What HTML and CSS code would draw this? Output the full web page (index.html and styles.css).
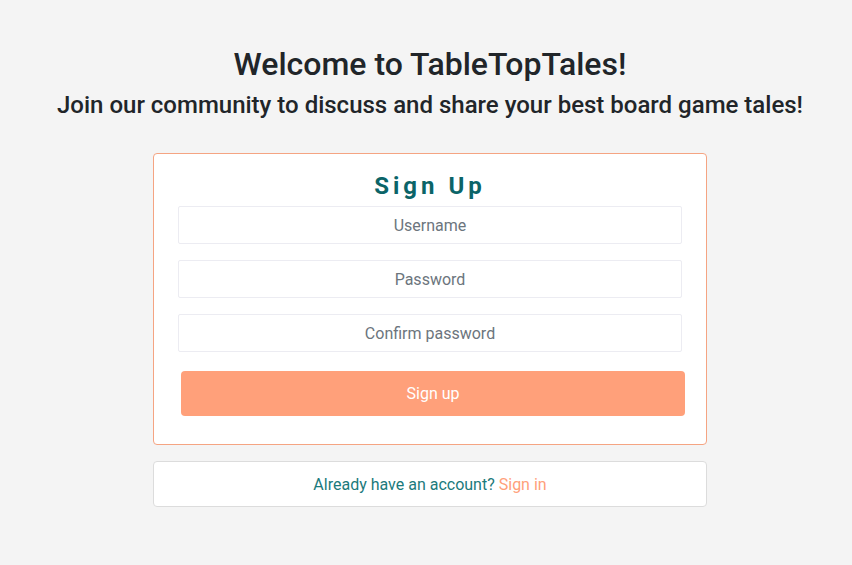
FILE: index.html
```html
<!DOCTYPE html>
<html>
<head>
<meta charset="utf-8">
<link rel="stylesheet" href="styles.css">
</head>
<body>
<main class="page">
  <h1 class="title">Welcome to TableTopTales!</h1>
  <h2 class="subtitle">Join our community to discuss and share your best board game tales!</h2>
  <form class="card">
    <h3 class="card-title">Sign Up</h3>
    <input class="field" type="text" placeholder="Username">
    <input class="field" type="password" placeholder="Password">
    <input class="field" type="password" placeholder="Confirm password">
    <button class="btn" type="button">Sign up</button>
  </form>
  <div class="alt">Already have an account? <a class="alt-link" href="#">Sign in</a></div>
</main>
</body>
</html>
```
FILE: styles.css
```css
html, body { margin: 0; padding: 0; }
body {
  background: #f4f4f4;
  font-family: Roboto, "Noto Sans", sans-serif;
  color: #212529;
}
.page {
  display: flex;
  flex-direction: column;
  align-items: center;
  padding-top: 45px;
  padding-left: 8px;
}
.title {
  margin: 0;
  font-size: 32px;
  font-weight: 500;
  line-height: 38px;
}
.subtitle {
  margin: 0;
  margin-top: 7px;
  font-size: 24px;
  font-weight: 500;
  line-height: 30px;
}
.card {
  box-sizing: border-box;
  width: 554px;
  margin-top: 33px;
  background: #fff;
  border: 1px solid #f5a482;
  border-radius: 4px;
  padding: 18px 24px 28px;
  display: flex;
  flex-direction: column;
}
.card-title {
  margin: 0 0 6px;
  text-align: center;
  color: #0b6468;
  font-size: 24px;
  font-weight: 700;
  letter-spacing: 4px;
  line-height: 28px;
}
.field {
  box-sizing: border-box;
  width: 504px;
  height: 38px;
  margin: 0 0 16px;
  border: 1px solid #ececf2;
  border-radius: 2px;
  background: #fff;
  font-family: Roboto, sans-serif;
  font-size: 16px;
  text-align: center;
  outline: none;
}
.field::placeholder { color: #6c757d; }
.btn {
  box-sizing: border-box;
  width: 504px;
  height: 45px;
  margin: 3px 0 0 3px;
  border: none;
  border-radius: 4px;
  background: #ffa07a;
  color: #fff;
  font-family: Roboto, sans-serif;
  font-size: 16px;
}
.alt {
  box-sizing: border-box;
  width: 554px;
  height: 46px;
  margin-top: 16px;
  background: #fff;
  border: 1px solid #dcdcdc;
  border-radius: 4px;
  display: flex;
  align-items: center;
  justify-content: center;
  color: #1b7a7c;
  font-size: 16px;
}
.alt-link {
  color: #ffa07a;
  text-decoration: none;
  margin-left: 4px;
}
```
